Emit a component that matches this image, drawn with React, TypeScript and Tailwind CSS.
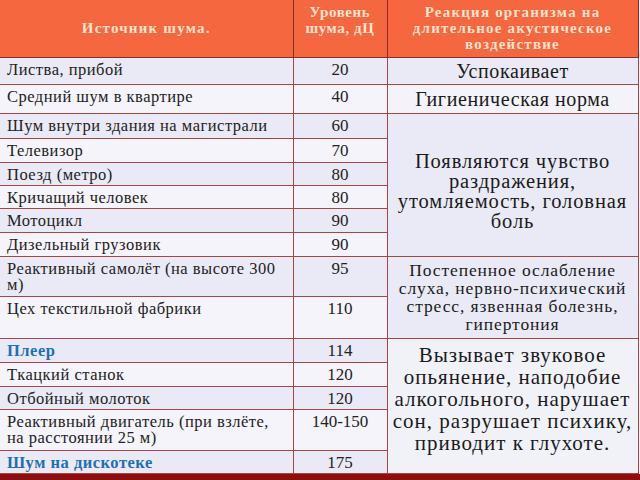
import React from 'react';

interface Row {
  source: string;
  level: string;
  h: number;
  blue?: boolean;
}

const rows: Row[] = [
  { source: 'Листва, прибой', level: '20', h: 27 },
  { source: 'Средний шум в квартире', level: '40', h: 29 },
  { source: 'Шум внутри здания на магистрали', level: '60', h: 25 },
  { source: 'Телевизор', level: '70', h: 24 },
  { source: 'Поезд (метро)', level: '80', h: 23 },
  { source: 'Кричащий человек', level: '80', h: 23 },
  { source: 'Мотоцикл', level: '90', h: 24 },
  { source: 'Дизельный грузовик', level: '90', h: 24 },
  { source: 'Реактивный самолёт (на высоте 300 м)', level: '95', h: 40 },
  { source: 'Цех текстильной фабрики', level: '110', h: 42 },
  { source: 'Плеер', level: '114', h: 24, blue: true },
  { source: 'Ткацкий станок', level: '120', h: 24 },
  { source: 'Отбойный молоток', level: '120', h: 23 },
  { source: 'Реактивный двигатель (при взлёте, на расстоянии 25 м)', level: '140-150', h: 41 },
  { source: 'Шум на дискотеке', level: '175', h: 23, blue: true },
];

// reaction cells, keyed by the row they start on
const reactions: Record<number, { text: string; span: number; cls: string }> = {
  0: { text: 'Успокаивает', span: 1, cls: 'text-[20px] tracking-[0.6px] leading-[20px] bg-[#e9eaf5]' },
  1: { text: 'Гигиеническая норма', span: 1, cls: 'text-[20px] tracking-[0.6px] leading-[20px] bg-[#f3f3f9]' },
  2: {
    text: 'Появляются чувство раздражения, утомляемость, головная боль',
    span: 6,
    cls: 'text-[20.5px] tracking-[0.9px] leading-[20px] pt-[12px] px-[6px] bg-[#e9eaf5]',
  },
  8: {
    text: 'Постепенное ослабление слуха, нервно-психический стресс, язвенная болезнь, гипертония',
    span: 2,
    cls: 'text-[17.5px] tracking-[0.9px] leading-[18px] px-[4px] bg-[#e9eaf5]',
  },
  10: {
    text: 'Вызывает звуковое опьянение, наподобие алкогольного, нарушает сон, разрушает психику, приводит к глухоте.',
    span: 5,
    cls: 'text-[21px] tracking-[1px] leading-[22px] pb-[14px] px-[4px] bg-[#f1f1f8]',
  },
};

const App: React.FC = () => {
  return (
    <div className="w-[640px] h-[480px] bg-[#f4f4fa] overflow-hidden font-['Liberation_Serif',serif]">
      <table className="table-fixed border-collapse w-[638px] text-[#222]">
        <colgroup>
          <col className="w-[293px]" />
          <col className="w-[94px]" />
          <col className="w-[251px]" />
        </colgroup>
        <thead>
          <tr className="h-[57px] bg-[#f4673f] text-[#fde3cf] font-bold text-[15px] tracking-[1.2px] leading-[16px]">
            <th className="border-r border-b border-[#8c2a2a] align-middle">Источник шума.</th>
            <th className="border-r border-b border-[#8c2a2a] align-top pt-[4px] tracking-[0.6px]">
              Уровень<br />шума, дЦ
            </th>
            <th className="border-b border-r border-[#8c2a2a] align-top pt-[4px] px-[6px]">
              Реакция организма на длительное акустическое воздействие
            </th>
          </tr>
        </thead>
        <tbody>
          {rows.map((r, i) => {
            const bg = i % 2 === 0 ? 'bg-[#e9eaf5]' : 'bg-[#f4f4fa]';
            const re = reactions[i];
            return (
              <tr key={i} style={{ height: r.h }}>
                <td
                  className={`${bg} border-r border-b border-[#a04848] align-top pl-[7px] pr-[2px] pt-[4px] text-[16.5px] tracking-[0.5px] leading-[16px] ${
                    r.blue ? 'text-[#1f6fb2] font-bold' : ''
                  }`}
                >
                  {r.source}
                </td>
                <td className={`${bg} border-r border-b border-[#a04848] align-top pt-[4px] text-center text-[17px] leading-[16px]`}>
                  {r.level}
                </td>
                {re && (
                  <td
                    rowSpan={re.span}
                    className={`border-r border-b border-[#a04848] align-middle text-center text-[#1a1a1a] ${re.cls}`}
                  >
                    {re.text}
                  </td>
                )}
              </tr>
            );
          })}
        </tbody>
      </table>
      <div className="h-[7px] bg-[#8e0d0d]" />
    </div>
  );
};

export default App;
